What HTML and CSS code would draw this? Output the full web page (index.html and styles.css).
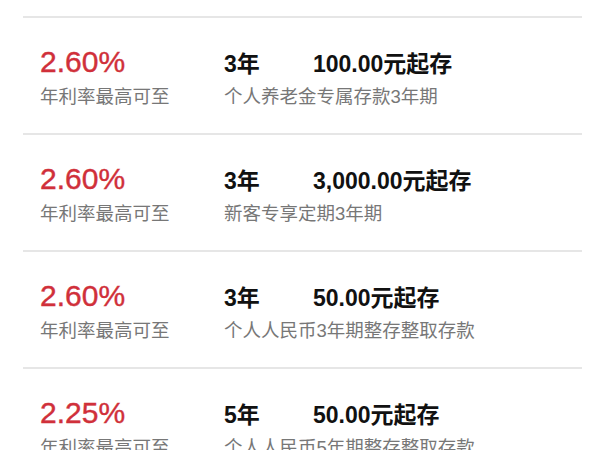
FILE: index.html
```html
<!DOCTYPE html>
<html lang="zh-CN">
<head>
<meta charset="utf-8">
<link rel="stylesheet" href="styles.css">
</head>
<body>
<div class="list">
  <div class="item">
    <div class="rate">2.60%</div>
    <div class="term">3年</div>
    <div class="amount">100.00元起存</div>
    <div class="label">年利率最高可至</div>
    <div class="desc">个人养老金专属存款3年期</div>
  </div>
  <div class="item">
    <div class="rate">2.60%</div>
    <div class="term">3年</div>
    <div class="amount">3,000.00元起存</div>
    <div class="label">年利率最高可至</div>
    <div class="desc">新客专享定期3年期</div>
  </div>
  <div class="item">
    <div class="rate">2.60%</div>
    <div class="term">3年</div>
    <div class="amount">50.00元起存</div>
    <div class="label">年利率最高可至</div>
    <div class="desc">个人人民币3年期整存整取存款</div>
  </div>
  <div class="item">
    <div class="rate">2.25%</div>
    <div class="term">5年</div>
    <div class="amount">50.00元起存</div>
    <div class="label">年利率最高可至</div>
    <div class="desc">个人人民币5年期整存整取存款</div>
  </div>
</div>
</body>
</html>
```
FILE: styles.css
```css
html, body {
  margin: 0;
  padding: 0;
  background: #ffffff;
  overflow: hidden;
}
body {
  font-family: "Liberation Sans", "Noto Sans CJK SC", sans-serif;
  width: 600px;
  height: 450px;
}
.list {
  margin: 16px 18px 0 23px;
}
.item {
  border-top: 2px solid #e6e6e6;
  height: 117px;
  box-sizing: border-box;
  padding-left: 17px;
  padding-top: 26px;
  display: grid;
  grid-template-columns: 184px 89px 1fr;
  grid-template-rows: auto auto;
  align-content: start;
}
.rate, .term, .amount {
  align-self: baseline;
  line-height: 36px;
}
.rate {
  color: #d0303a;
  font-size: 30px;
  -webkit-text-stroke: 0.4px #d0303a;
}
.term, .amount {
  color: #111111;
  font-size: 23px;
  font-weight: bold;
}
.label, .desc {
  color: #777777;
  font-size: 18.5px;
  line-height: 26px;
  margin-top: 2px;
}
.desc {
  grid-column: 2 / 4;
}
```
